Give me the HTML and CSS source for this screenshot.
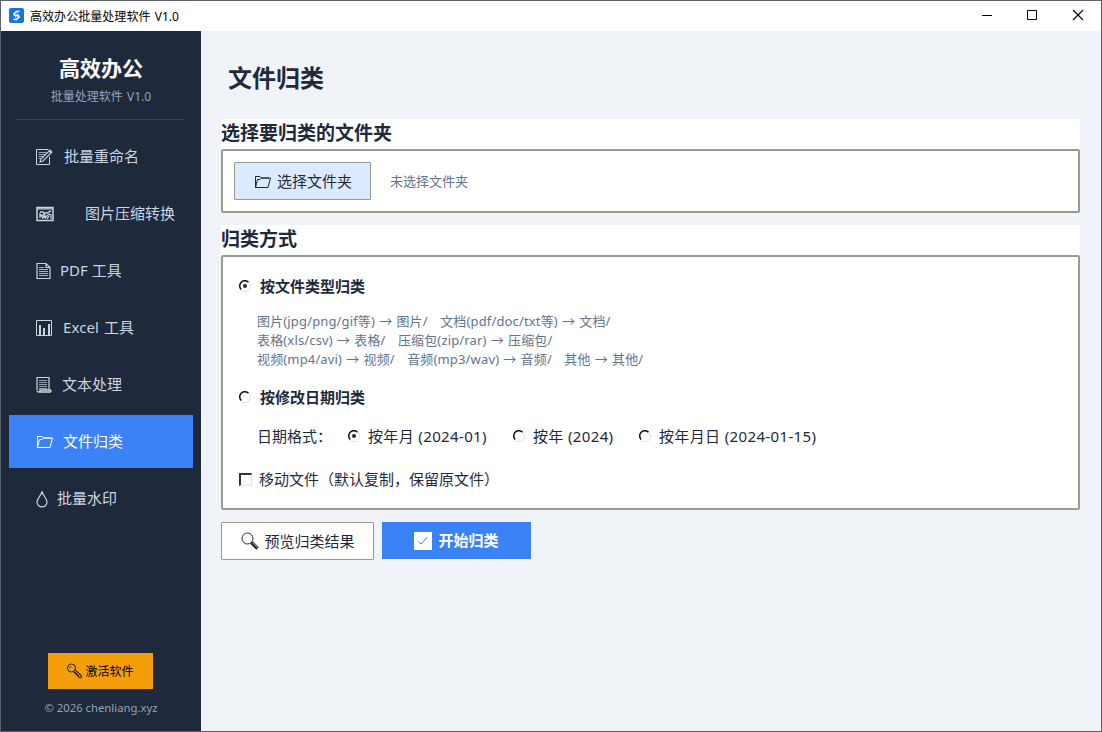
FILE: index.html
```html
<!DOCTYPE html>
<html lang="zh-CN">
<head>
    <meta charset="UTF-8">
    <meta name="viewport" content="width=device-width, initial-scale=1.0">
    <title>高效办公批量处理软件 V1.0</title>
    <link rel="stylesheet" href="styles.css">
</head>
<body>
    <div class="window">
        <header class="titlebar">
            <svg class="app-icon" width="15" height="15" viewBox="0 0 15 15">
                <rect width="15" height="15" rx="2" fill="#1976d8"/>
                <path d="M10.5 3.5H7.5L5 6l1 1.500h3.500l.5 1.500-2.500 2.500H4.500" fill="none" stroke="#fff" stroke-width="1.700"/>
                <path d="M8.500 5.500L6.500 9.500" stroke="#fff"/>
            </svg>
            <span class="app-name">高效办公批量处理软件 V1.0</span>
            <div class="window-buttons">
                <svg width="46" height="30" viewBox="0 0 46 30"><path d="M19 14.5h10" stroke="#000"/></svg>
                <svg width="46" height="30" viewBox="0 0 46 30"><path d="M18.5 9.5h9v9h-9z" fill="none" stroke="#000"/></svg>
                <svg width="46" height="30" viewBox="0 0 46 30"><path d="M18 9l10 10M28 9L18 19" stroke="#000" stroke-width="1.1"/></svg>
            </div>
        </header>
        <div class="body">
            <aside class="sidebar">
                <div class="brand">高效办公</div>
                <div class="version">批量处理软件 V1.0</div>
                <nav class="menu">
                    <a class="item">
                        <svg class="icon" width="20" height="20" viewBox="0 0 20 20" fill="none" stroke="currentColor">
                            <path d="M13.5 10v7.5h-13v-15h12"/>
                            <path d="M2.5 5.5h8M2.5 7.5h7M2.5 9.5h5M2.5 11.5h3" opacity=".75"/>
                            <path d="M4 15l1-3 9-9 2 2-9 9zM13 4l2 2" stroke-width="1.1"/>
                        </svg>
                        <span>批量重命名</span>
                    </a>
                    <a class="item item-image">
                        <svg class="icon" width="20" height="20" viewBox="0 0 20 20" fill="none" stroke="currentColor">
                            <path d="M1 3.5h16v13H1z" stroke-width="1.5"/>
                            <path d="M1.500 4.800h15" stroke-width="1.800" opacity=".7"/>
                            <path d="M4 8h3l1 1h3l3-2 1 1M4 14v-4l2 2 2-2 2 3 3-3 2 1v4M6 14.500l2-2 2 2M11 15l2-3M4 11l4 3" stroke-width="1.300"/>
                        </svg>
                        <span>图片压缩转换</span>
                    </a>
                    <a class="item item-pdf">
                        <svg class="icon" width="20" height="20" viewBox="0 0 20 20" fill="none" stroke="currentColor">
                            <path d="M1 2.500h9l4 4v11H1zM10 2.500v4h4" stroke-width="1.200"/>
                            <path d="M3 6.500h5M3 8.500h9M3 10.500h9M3 12.500h9M3 14.500h9" opacity=".8"/>
                        </svg>
                        <span>PDF 工具</span>
                    </a>
                    <a class="item item-excel">
                        <svg class="icon" width="20" height="20" viewBox="0 0 20 20" fill="none" stroke="currentColor">
                            <path d="M.5 2.500h15v15H.5z"/>
                            <path d="M4 7v10M8 10v7M13 6v11" stroke-width="2"/>
                        </svg>
                        <span>Excel 工具</span>
                    </a>
                    <a class="item item-text">
                        <svg class="icon" width="20" height="20" viewBox="0 0 20 20" fill="none" stroke="currentColor">
                            <path d="M1 15V2.500h12V15" stroke-width="1.200"/>
                            <path d="M3 5.500h8M3 7.500h8M3 9.500h8M3 11.500h8M3 13.500h8" opacity=".7"/>
                            <path d="M1 15.500Q1 17 2.500 17h12q1-1.500 0-2H4v1.500" stroke-width="1.300"/>
                        </svg>
                        <span>文本处理</span>
                    </a>
                    <a class="item item-sort active">
                        <svg class="icon" width="20" height="20" viewBox="0 0 20 20" fill="none" stroke="currentColor" stroke-linejoin="round">
                            <path d="M1.500 15.500v-11h4.500l1.500 1.500h7v1M1.500 15.500h12.500l2.500-9.500h-9l-1.500 1.500H3.500z"/>
                        </svg>
                        <span>文件归类</span>
                    </a>
                    <a class="item item-mark">
                        <svg class="icon" width="20" height="20" viewBox="0 0 20 20" fill="none" stroke="currentColor">
                            <path d="M6 2.500C5 7 1 9.500 1 13.200a5 4.600 0 0 0 10 0C11 9.500 7.200 7 6 2.500z" stroke-width="1.200"/>
                        </svg>
                        <span>批量水印</span>
                    </a>
                </nav>
                <div class="activate">
                    <svg width="16" height="16" viewBox="0 0 16 16" fill="none" stroke="#2b2110">
                        <circle cx="5.500" cy="5" r="4"/>
                        <path d="M3.500 5l1.500-1.700"/>
                        <path d="M7.500 8.500l6 6.200h1.700v-2.200L9 6.800" stroke-width="1.100"/>
                        <path d="M9 9l4 4"/>
                    </svg>
                    <span>激活软件</span>
                </div>
                <div class="copyright">© 2026 chenliang.xyz</div>
            </aside>
            <main class="content">
                <h1>文件归类</h1>

                <section class="group">
                    <h2>选择要归类的文件夹</h2>
                    <div class="frame frame-folder">
                        <div class="button pick">
                            <svg width="20" height="20" viewBox="0 0 20 20" fill="none" stroke="currentColor" stroke-linejoin="round">
                                <path d="M2.500 16.500v-11H7l1.500 1.500h7v1M2.500 16.500H15l2.500-9.500h-9L7 8.500H4.500z"/>
                            </svg>
                            <span>选择文件夹</span>
                        </div>
                        <span class="hint">未选择文件夹</span>
                    </div>
                </section>

                <section class="group">
                    <h2>归类方式</h2>
                    <div class="frame frame-mode">
                        <div class="choice strong"><svg class="radio" width="12" height="12" viewBox="0 0 12 12"><path d="M2.200 9.500A4.800 4.800 0 0 1 9.500 2.200" fill="none" stroke="#111" stroke-width="1.500"/><path d="M10 2A5.200 5.200 0 0 1 2 10" fill="none" stroke="#e3e3e3"/><circle cx="6" cy="6" r="2" fill="#1e293b"/></svg><span>按文件类型归类</span></div>
                        <div class="rules">
                            <div>图片(jpg/png/gif等) → 图片/ &nbsp; 文档(pdf/doc/txt等) → 文档/</div>
                            <div>表格(xls/csv) → 表格/ &nbsp; 压缩包(zip/rar) → 压缩包/</div>
                            <div>视频(mp4/avi) → 视频/ &nbsp; 音频(mp3/wav) → 音频/ &nbsp; 其他 → 其他/</div>
                        </div>
                        <div class="choice strong"><svg class="radio" width="12" height="12" viewBox="0 0 12 12"><path d="M2.200 9.500A4.800 4.800 0 0 1 9.500 2.200" fill="none" stroke="#111" stroke-width="1.500"/><path d="M10 2A5.200 5.200 0 0 1 2 10" fill="none" stroke="#e3e3e3"/></svg><span>按修改日期归类</span></div>
                        <div class="formats">
                            <span class="formats-label">日期格式：</span>
                            <div class="choice format-month"><svg class="radio" width="12" height="12" viewBox="0 0 12 12"><path d="M2.200 9.500A4.800 4.800 0 0 1 9.500 2.200" fill="none" stroke="#111" stroke-width="1.500"/><path d="M10 2A5.200 5.200 0 0 1 2 10" fill="none" stroke="#e3e3e3"/><circle cx="6" cy="6" r="2" fill="#1e293b"/></svg><span>按年月 (2024-01)</span></div>
                            <div class="choice format-year"><svg class="radio" width="12" height="12" viewBox="0 0 12 12"><path d="M2.200 9.500A4.800 4.800 0 0 1 9.500 2.200" fill="none" stroke="#111" stroke-width="1.500"/><path d="M10 2A5.200 5.200 0 0 1 2 10" fill="none" stroke="#e3e3e3"/></svg><span>按年 (2024)</span></div>
                            <div class="choice"><svg class="radio" width="12" height="12" viewBox="0 0 12 12"><path d="M2.200 9.500A4.800 4.800 0 0 1 9.500 2.200" fill="none" stroke="#111" stroke-width="1.500"/><path d="M10 2A5.200 5.200 0 0 1 2 10" fill="none" stroke="#e3e3e3"/></svg><span>按年月日 (2024-01-15)</span></div>
                        </div>
                        <div class="choice move"><i class="check"></i><span>移动文件（默认复制，保留原文件）</span></div>
                    </div>
                </section>

                <div class="actions">
                    <div class="button preview">
                        <svg width="20" height="20" viewBox="0 0 20 20" fill="none" stroke="currentColor">
                            <circle cx="7.500" cy="7.500" r="5.500"/>
                            <path d="M11.500 11.500l6 6" stroke-width="3.600"/>
                            <path d="M12.800 11.800l4.500 4.500" stroke="#aab" stroke-width="1"/>
                        </svg>
                        <span>预览归类结果</span>
                    </div>
                    <div class="button start">
                        <svg width="18" height="18" viewBox="0 0 18 18">
                            <rect width="18" height="18" fill="#fff"/>
                            <path d="M4.500 9.500l2.500 2.500 6.500-7" fill="none" stroke="#3b82f6" stroke-width="1"/>
                        </svg>
                        <span>开始归类</span>
                    </div>
                </div>
            </main>
        </div>
    </div>
</body>
</html>
```

FILE: styles.css
```css
* {
    box-sizing: border-box;
}
body {
    margin: 0;
    font-family: "Noto Sans", "Noto Sans CJK SC", sans-serif;
    font-size: 15px;
    color: #1e293b;
}
h1, h2 {
    margin: 0;
}
svg {
    display: block;
    flex: none;
}
span {
    white-space: nowrap;
}
.window {
    width: 1102px;
    height: 732px;
    border: 1px solid #5b646b;
    display: flex;
    flex-direction: column;
    overflow: hidden;
}
.titlebar {
    height: 30px;
    flex: none;
    display: flex;
    align-items: center;
    padding-left: 8px;
    background: #fff;
    color: #000;
    font-size: 12px;
}
.app-icon {
    margin-bottom: 2px;
}
.app-name {
    margin-left: 6px;
    padding-bottom: 1px;
    word-spacing: 1px;
    letter-spacing: .05px;
}
.window-buttons {
    display: flex;
    margin-left: auto;
}
.body {
    flex: 1;
    display: flex;
    min-height: 0;
}

/* sidebar */
.sidebar {
    width: 200px;
    display: flex;
    flex-direction: column;
    align-items: center;
    background: #1e293b;
    color: #cbd5e1;
}
.brand {
    margin-top: 21px;
    line-height: 32px;
    font-size: 21px;
    font-weight: bold;
    color: #fff;
}
.version {
    margin-top: 1px;
    line-height: 24px;
    font-size: 12px;
    word-spacing: 1px;
    color: #94a3b8;
}
.menu {
    width: 184px;
    margin-top: 10px;
    padding-top: 11px;
    display: flex;
    flex-direction: column;
    gap: 4px;
    background: linear-gradient(#334155, #334155) center top / 168px 1px no-repeat;
}
.item {
    height: 53px;
    display: flex;
    align-items: center;
    padding-left: 27px;
}
.item span {
    padding-bottom: 2px;
}
.icon {
    margin-right: 8px;
}
.item-image .icon {
    margin-right: 29px;
}
.item-pdf .icon {
    margin-right: 4px;
}
.item-excel .icon {
    margin-right: 7px;
}
.item-excel span {
    word-spacing: 1px;
    letter-spacing: .1px;
}
.item-text .icon {
    margin-right: 6px;
}
.item-sort .icon {
    margin-right: 7px;
}
.item-mark .icon {
    margin-right: 1px;
}
.active {
    background: #3b82f6;
    color: #fff;
}
.activate {
    width: 105px;
    height: 36px;
    margin-top: auto;
    margin-right: 2px;
    display: flex;
    align-items: center;
    justify-content: center;
    gap: 3px;
    background: #f59e0b;
    color: #000;
    font-size: 12px;
}
.copyright {
    line-height: 20px;
    margin: 9px 0 13px;
    font-size: 11.3px;
    color: #94a3b8;
}

/* content */
.content {
    flex: 1;
    padding: 29px 21px 0 20px;
    background: #f0f4f8;
}
h1 {
    margin-bottom: 23px;
    padding-left: 7px;
    font-size: 24px;
    line-height: 36px;
}
.group {
    margin-bottom: 12px;
    background: #fff;
}
h2 {
    height: 30px;
    font-size: 19px;
    line-height: 28px;
}
.frame {
    border: 2px solid #9c9a8e;
    border-radius: 2px;
}
.frame-folder {
    height: 64px;
    display: flex;
    align-items: center;
    padding-left: 11px;
}
.button {
    display: flex;
    align-items: center;
    justify-content: center;
    height: 38px;
}
.button span, .hint {
    padding-bottom: 2px;
}
.pick {
    width: 137px;
    gap: 4px;
    border: 1px solid #9c9a8e;
    border-radius: 1px;
    background: #dbeafe;
}
.hint {
    margin-left: 19px;
    font-size: 13px;
    color: #64748b;
}
.frame-mode {
    height: 255px;
    padding: 17px 0 0 16px;
}
.choice {
    display: flex;
    align-items: center;
    height: 24px;
}
.choice span, .formats-label {
    padding-bottom: 2px;
}
.radio {
    margin-right: 8px;
}
.strong {
    font-weight: bold;
}
.strong .radio {
    margin-right: 9px;
}
.rules {
    margin: 14px 0 16px 18px;
    font-size: 13px;
    line-height: 19px;
    letter-spacing: .15px;
    word-spacing: .6px;
    color: #64748b;
}
.formats {
    display: flex;
    align-items: center;
    height: 24px;
    margin: 15px 0 19px 18px;
}
.formats .choice {
    letter-spacing: .36px;
}
.formats-label {
    width: 91px;
}
.format-month {
    width: 165px;
}
.format-year {
    width: 126px;
}
.check {
    width: 13px;
    height: 13px;
    margin-right: 7px;
    border: 1px solid #e3e3e3;
    border-top: 2px solid #333;
    border-left: 2px solid #333;
}
.actions {
    display: flex;
    gap: 8px;
}
.preview {
    width: 153px;
    gap: 4px;
    border: 1px solid #9c9a8e;
    border-radius: 1px;
    background: #fff;
}
.start {
    width: 149px;
    height: 37px;
    gap: 6px;
    background: #3b82f6;
    color: #fff;
    font-weight: bold;
}
```
